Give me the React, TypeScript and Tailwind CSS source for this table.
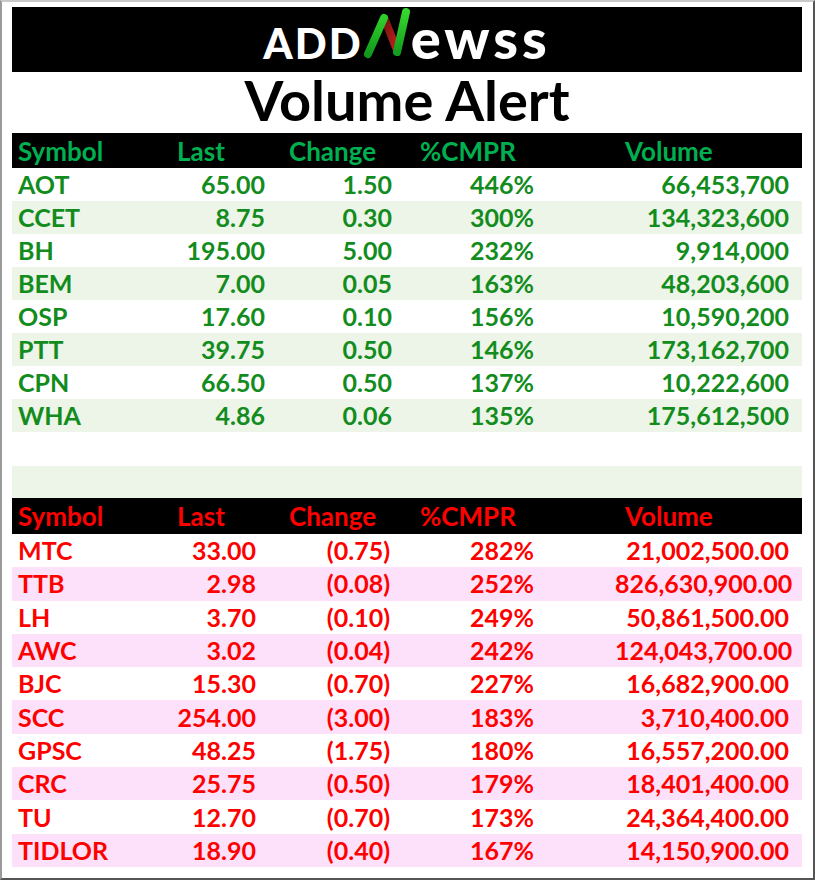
import React from 'react';

type Row = [string, string, string, string, string];

const gainers: Row[] = [
  ['AOT', '65.00', '1.50', '446%', '66,453,700'],
  ['CCET', '8.75', '0.30', '300%', '134,323,600'],
  ['BH', '195.00', '5.00', '232%', '9,914,000'],
  ['BEM', '7.00', '0.05', '163%', '48,203,600'],
  ['OSP', '17.60', '0.10', '156%', '10,590,200'],
  ['PTT', '39.75', '0.50', '146%', '173,162,700'],
  ['CPN', '66.50', '0.50', '137%', '10,222,600'],
  ['WHA', '4.86', '0.06', '135%', '175,612,500'],
];

const losers: Row[] = [
  ['MTC', '33.00', '(0.75)', '282%', '21,002,500.00'],
  ['TTB', '2.98', '(0.08)', '252%', '826,630,900.00'],
  ['LH', '3.70', '(0.10)', '249%', '50,861,500.00'],
  ['AWC', '3.02', '(0.04)', '242%', '124,043,700.00'],
  ['BJC', '15.30', '(0.70)', '227%', '16,682,900.00'],
  ['SCC', '254.00', '(3.00)', '183%', '3,710,400.00'],
  ['GPSC', '48.25', '(1.75)', '180%', '16,557,200.00'],
  ['CRC', '25.75', '(0.50)', '179%', '18,401,400.00'],
  ['TU', '12.70', '(0.70)', '173%', '24,364,400.00'],
  ['TIDLOR', '18.90', '(0.40)', '167%', '14,150,900.00'],
];

const cols = 'grid grid-cols-[158px_110px_130px_205px_187px] items-center';

function HeaderRow({ color, height }: { color: string; height: string }) {
  return (
    <div className={`${cols} ${height} bg-black ${color} text-[26px] font-bold leading-none`}>
      <span className="pl-[6px]">Symbol</span>
      <span className="pl-[7px]">Last</span>
      <span className="pl-[9px]">Change</span>
      <span className="pl-[10px]">%CMPR</span>
      <span className="pl-[10px]">Volume</span>
    </div>
  );
}

function Logo() {
  return (
    <div className="flex h-[65px] items-baseline justify-center bg-black text-white">
      <span className="text-[42px] font-black leading-[42px] tracking-[2px]">ADD</span>
      <svg width="48" height="52" viewBox="0 0 48 52" className="mb-[-10px]">
        <defs>
          <linearGradient id="gl" x1="0" y1="1" x2="0" y2="0">
            <stop offset="0" stopColor="#119a1c" />
            <stop offset="1" stopColor="#2fcf2a" />
          </linearGradient>
          <linearGradient id="gr" x1="0" y1="1" x2="0" y2="0">
            <stop offset="0" stopColor="#139e1f" />
            <stop offset="1" stopColor="#36d62e" />
          </linearGradient>
          <linearGradient id="rd" x1="0" y1="0" x2="1" y2="1">
            <stop offset="0" stopColor="#7a1010" />
            <stop offset="1" stopColor="#c42222" />
          </linearGradient>
        </defs>
        <line x1="22" y1="13" x2="34" y2="43" stroke="url(#rd)" strokeWidth="8" strokeLinecap="round" />
        <line x1="5" y1="47" x2="21" y2="11" stroke="url(#gl)" strokeWidth="8" strokeLinecap="round" />
        <line x1="34" y1="45" x2="43" y2="5" stroke="url(#gr)" strokeWidth="8" strokeLinecap="round" />
      </svg>
      <span className="text-[56px] font-black leading-[42px] tracking-[4px]">ewss</span>
    </div>
  );
}

function DataRows({
  rows,
  text,
  stripe,
  rowH,
  pads,
}: {
  rows: Row[];
  text: string;
  stripe: string;
  rowH: string;
  pads: string[];
}) {
  return (
    <>
      {rows.map((r, i) => (
        <div
          key={r[0]}
          className={`${cols} ${rowH} ${i % 2 === 1 ? stripe : 'bg-white'} ${text} text-[25px] font-bold leading-none`}
        >
          <span className="pl-[6px]">{r[0]}</span>
          <span className={`text-right ${pads[0]}`}>{r[1]}</span>
          <span className={`text-right ${pads[1]}`}>{r[2]}</span>
          <span className={`text-right ${pads[2]}`}>{r[3]}</span>
          <span className={`text-right ${pads[3]}`}>{r[4]}</span>
        </div>
      ))}
    </>
  );
}

export default function App() {
  return (
    <div
      className="h-[880px] w-[815px] overflow-hidden border-2 border-t-[#c9c9c9] border-l-[#9a9a9a] border-r-[#555555] border-b-[#555555] bg-white pl-[10px] pt-[5px]"
      style={{ fontFamily: 'Lato, "Noto Sans", sans-serif' }}
    >
      <div className="flex w-[790px] flex-col">
        <Logo />
        <div className="flex h-[61px] items-center justify-center pb-[6px] text-[56px] font-bold leading-none text-black">
          Volume Alert
        </div>

        <HeaderRow color="text-[#00b050]" height="h-[35px]" />
        <DataRows
          rows={gainers}
          text="text-[#128c1d]"
          stripe="bg-[#edf4e8]"
          rowH="h-[33px]"
          pads={['pr-[15px]', 'pr-[18px]', 'pr-[81px]', 'pr-[13px]']}
        />
        <div className="h-[34px] bg-white" />
        <div className="h-[32px] bg-[#edf4e8]" />

        <HeaderRow color="text-[#ff0000]" height="h-[36px]" />
        <DataRows
          rows={losers}
          text="text-[#ff0000]"
          stripe="bg-[#fde0fa]"
          rowH="h-[33.3px]"
          pads={['pr-[24px]', 'pr-[20px]', 'pr-[81px]', 'pr-[13px]']}
        />
      </div>
    </div>
  );
}
